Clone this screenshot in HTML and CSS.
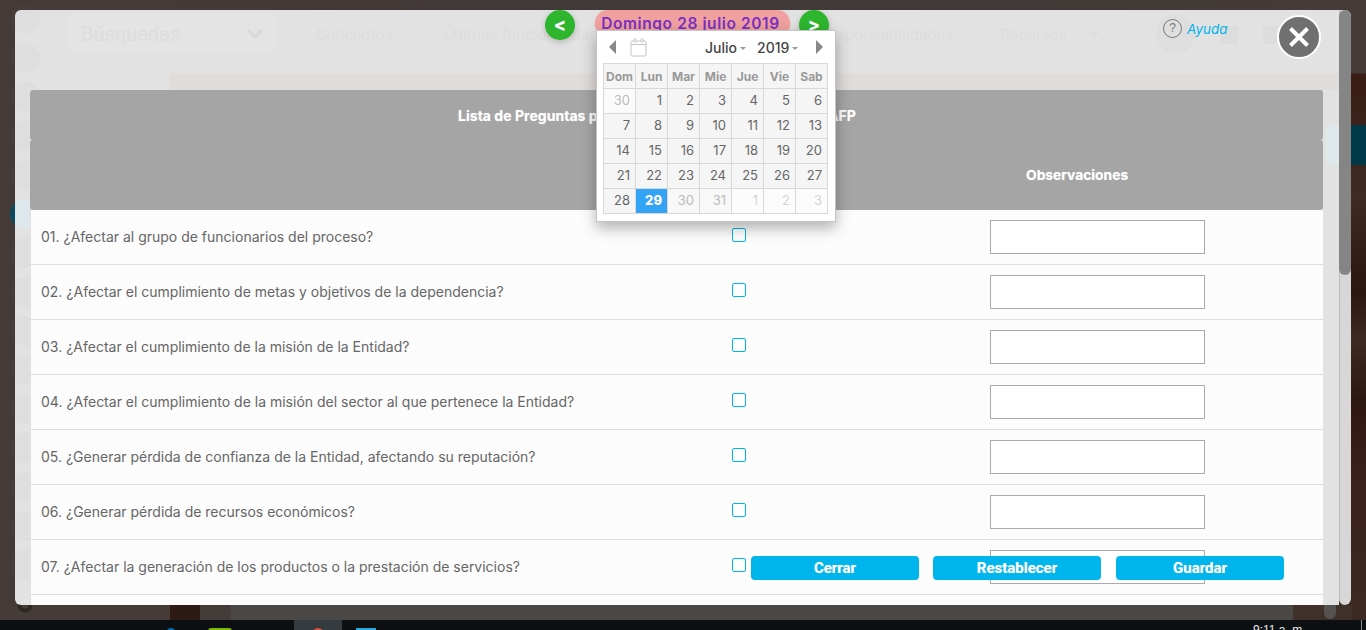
FILE: index.html

```html
<!DOCTYPE html>
<html lang="es">
<head>
  <meta charset="UTF-8" />
  <title>Lista de Preguntas</title>
  <link rel="stylesheet" href="styles.css">
</head>
<body>

  <!-- page behind the dialog -->
  <div class="desk">
    <div class="desk-top"></div>
    <div class="desk-side"><div class="desk-teal"></div></div>
    <div class="desk-bottom">
      <span class="seg seg-a"></span>
      <span class="seg seg-b"></span>
      <span class="seg seg-c"></span>
      <span class="seg seg-d"></span>
      <span class="seg seg-e"></span>
    </div>
    <svg class="gear" viewBox="0 0 16 16"><circle cx="8" cy="8" r="5.5" fill="none" stroke="#2b2826" stroke-width="4"/></svg>
    <div class="taskbar">
      <span class="task task-blue"></span>
      <span class="task task-green"></span>
      <span class="task task-active"><i></i></span>
      <span class="task task-sky"></span>
      <span class="clock">9:11 a. m.</span>
      <span class="tray-line"></span>
    </div>
  </div>

  <!-- dialog -->
  <div class="modal">
    <div class="modal-main">
      <div class="ghost-nav">
        <div class="ghost-search">Búsquedas
          <svg width="16" height="10" viewBox="0 0 16 10"><path d="M1 1l7 7 7-7" fill="none" stroke="#d8d8d8" stroke-width="3"/></svg>
        </div>
        <span class="ghost-link ghost-a">Conceptos</span>
        <span class="ghost-link ghost-b">Últimas funcionalidades</span>
        <span class="ghost-link ghost-c">Responsabilidades</span>
        <span class="ghost-link ghost-d">Recursos</span>
        <span class="ghost-caret"></span>
      </div>
      <div class="ghost-band"></div>
      <div class="ghost-tools">
        <span class="ghost-round"></span>
        <span class="ghost-box"></span>
        <span class="ghost-box"></span>
      </div>
      <div class="ghost-teal"></div>

      <div class="panel">
        <div class="panel-title">Lista de Preguntas para calificar el impacto del riesgo AFP</div>
        <div class="panel-cols">
          <span class="col-obs">Observaciones</span>
        </div>
        <div class="row"><span class="q">01. ¿Afectar al grupo de funcionarios del proceso?</span><span class="check"></span><span class="obs"></span></div>
        <div class="row"><span class="q">02. ¿Afectar el cumplimiento de metas y objetivos de la dependencia?</span><span class="check"></span><span class="obs"></span></div>
        <div class="row"><span class="q">03. ¿Afectar el cumplimiento de la misión de la Entidad?</span><span class="check"></span><span class="obs"></span></div>
        <div class="row"><span class="q">04. ¿Afectar el cumplimiento de la misión del sector al que pertenece la Entidad?</span><span class="check"></span><span class="obs"></span></div>
        <div class="row"><span class="q">05. ¿Generar pérdida de confianza de la Entidad, afectando su reputación?</span><span class="check"></span><span class="obs"></span></div>
        <div class="row"><span class="q">06. ¿Generar pérdida de recursos económicos?</span><span class="check"></span><span class="obs"></span></div>
        <div class="row"><span class="q">07. ¿Afectar la generación de los productos o la prestación de servicios?</span><span class="check"></span><span class="obs"></span></div>
        <div class="row"></div>
      </div>

      <div class="actions">
        <a class="btn">Cerrar</a>
        <a class="btn">Restablecer</a>
        <a class="btn">Guardar</a>
      </div>

      <div class="help">
        <span class="help-icon">?</span>
        <span class="help-text">Ayuda</span>
      </div>
      <div class="close">
        <svg width="24" height="24" viewBox="0 0 24 24"><path d="M3.5 3.5l17 17M20.5 3.5l-17 17" stroke="#fff" stroke-width="4"/></svg>
      </div>

      <a class="day-btn day-prev">&lt;</a>
      <div class="day-pill">Domingo 28 julio 2019</div>
      <a class="day-btn day-next">&gt;</a>

      <div class="calendar">
        <div class="cal-head">
          <span class="cal-arrow cal-left"></span>
          <svg class="cal-icon" width="17" height="19" viewBox="0 0 17 19">
            <rect x="1" y="3" width="15" height="15" rx="1" fill="none" stroke="#c4c4c4"/>
            <path d="M1 6.5h15" stroke="#c4c4c4"/>
            <rect x="4" y="1" width="2" height="3" fill="#fff" stroke="#c4c4c4" stroke-width=".8"/>
            <rect x="11" y="1" width="2" height="3" fill="#fff" stroke="#c4c4c4" stroke-width=".8"/>
          </svg>
          <span class="cal-pick cal-month">Julio</span>
          <span class="cal-pick cal-year">2019</span>
          <span class="cal-arrow cal-right"></span>
        </div>
        <table class="cal-table">
          <tr><th>Dom</th><th>Lun</th><th>Mar</th><th>Mie</th><th>Jue</th><th>Vie</th><th>Sab</th></tr>
          <tr><td class="off first">30</td><td>1</td><td>2</td><td>3</td><td>4</td><td>5</td><td>6</td></tr>
          <tr><td>7</td><td>8</td><td>9</td><td>10</td><td>11</td><td>12</td><td>13</td></tr>
          <tr><td>14</td><td>15</td><td>16</td><td>17</td><td>18</td><td>19</td><td>20</td></tr>
          <tr><td>21</td><td>22</td><td>23</td><td>24</td><td>25</td><td>26</td><td>27</td></tr>
          <tr><td>28</td><td class="today">29</td><td class="off">30</td><td class="off">31</td><td class="next">1</td><td class="next">2</td><td class="next">3</td></tr>
        </table>
      </div>
    </div>
    <div class="scrollbar"><div class="scroll-thumb"></div></div>
  </div>

  <!-- side menu of the page, shows through the dialog edge -->
  <div class="rail">
    <span class="rail-item"></span><span class="rail-item"></span><span class="rail-item"></span>
    <span class="rail-item"></span><span class="rail-item"></span><span class="rail-item rail-on"></span>
    <span class="rail-item"></span><span class="rail-item"></span><span class="rail-item"></span>
    <span class="rail-item"></span><span class="rail-item"></span><span class="rail-item"></span>
    <span class="rail-item"></span><span class="rail-item"></span><span class="rail-item"></span>
  </div>

</body>
</html>
```

FILE: styles.css

```css
html, body {
  margin: 0;
  padding: 0;
  width: 1366px;
  height: 630px;
  overflow: hidden;
  background: #443a38;
  font-family: "Inter", "Liberation Sans", sans-serif;
}

/* page behind */
.desk {
  position: absolute;
  inset: 0;
  overflow: hidden;
}

.desk-top {
  height: 10px;
  background: linear-gradient(90deg, #453a38 0, #403937 50%, #443b38 100%);
}

.desk-side {
  position: absolute;
  right: 0;
  top: 0;
  width: 28px;
  height: 620px;
  background: linear-gradient(180deg, #443a38 0, #443a38 73px, #3a1d15 74px, #3f2a22 200px, #2c1610 290px, #3e2a22 340px, #2e1710 400px, #3a2019 470px, #3d2a23 620px);
}

.desk-teal {
  position: absolute;
  top: 125px;
  left: 0;
  width: 100%;
  height: 40px;
  background: #003a4a;
}

.desk-bottom {
  position: absolute;
  left: 0;
  top: 605px;
  width: 100%;
  height: 15px;
  display: flex;
}

.seg { display: block; height: 100%; }
.seg-a { width: 170px; background: #453c38; }
.seg-b { width: 30px; background: #2e1a14; }
.seg-c { width: 31px; background: #443c38; }
.seg-d { width: 1062px; background: #4a4846; }
.seg-e { width: 59px; background: #3f3029; position: relative; }

.seg-e::after {
  content: "";
  position: absolute;
  left: 31px;
  top: 0;
  width: 12px;
  height: 14px;
  border-radius: 0 0 6px 6px;
  background: #555250;
}

.gear {
  position: absolute;
  left: 17px;
  top: 597px;
  width: 16px;
  height: 16px;
}

.taskbar {
  position: absolute;
  left: 0;
  top: 620px;
  width: 100%;
  height: 10px;
  background: #0c1013;
  display: flex;
  overflow: hidden;
}

.task { display: block; height: 100%; }
.task-blue { width: 8px; margin-left: 167px; position: relative; top: 8px; background: #0a6fb0; border-radius: 4px 4px 0 0; }
.task-green { width: 24px; margin-left: 33px; position: relative; top: 8px; background: #7dba00; border-radius: 3px 3px 0 0; }
.task-active { width: 48px; margin-left: 62px; background: #363b40; display: flex; justify-content: center; }
.task-active i { width: 12px; height: 12px; margin-top: 8px; border-radius: 50%; background: #d9503f; }
.task-sky { width: 20px; margin-left: 14px; position: relative; top: 8px; background: #29a9e0; }

.clock {
  margin-left: 877px;
  margin-top: 4px;
  font-family: "Liberation Sans", sans-serif;
  font-size: 12px;
  line-height: 12px;
  color: #e8e8e8;
  white-space: nowrap;
}

.tray-line {
  position: absolute;
  left: 1361px;
  top: 0;
  width: 1px;
  height: 100%;
  background: #8a8a8a;
}

/* dialog */
.modal {
  position: absolute;
  left: 15px;
  top: 10px;
  width: 1336px;
  height: 595px;
  display: flex;
  border-radius: 6px;
  overflow: hidden;
}

.modal-main {
  position: relative;
  width: 1324px;
  height: 100%;
  background: #e2e2e2;
  overflow: hidden;
}

.ghost-nav {
  height: 63px;
  display: flex;
  font-family: "Roboto", sans-serif;
  font-size: 16px;
  color: #dddddd;
}

.ghost-search {
  width: 208px;
  height: 41px;
  margin: 3px 0 0 53px;
  padding: 0 13px;
  box-sizing: border-box;
  display: flex;
  align-items: center;
  justify-content: space-between;
  background: #e4e4e4;
  border-radius: 9px;
  font-size: 20px;
}

.ghost-link { margin-top: 15px; white-space: nowrap; }
.ghost-a { margin-left: 40px; }
.ghost-b { margin-left: 51px; }
.ghost-c { margin-left: 203px; }
.ghost-d { margin-left: 47px; }

.ghost-caret {
  margin: 22px 0 0 22px;
  width: 0;
  height: 0;
  border-top: 6px solid #dddddd;
  border-left: 5px solid transparent;
  border-right: 5px solid transparent;
}

.ghost-band {
  height: 17px;
  margin-left: 155px;
  background: #e0dcda;
}

.ghost-tools {
  position: absolute;
  left: 1141px;
  top: 5px;
  display: flex;
  align-items: center;
  gap: 25px;
}

.ghost-round { width: 39px; height: 39px; border-radius: 50%; background: #dedede; }
.ghost-box { width: 18px; height: 18px; background: #dddddd; }

.ghost-teal {
  position: absolute;
  left: 1311px;
  top: 115px;
  width: 13px;
  height: 40px;
  border-radius: 4px 0 0 4px;
  background: #dfe8ea;
}

.panel {
  position: relative;
  z-index: 2;
  margin-left: 15px;
  width: 1293px;
  background: #e2e2e2;
}

.panel-title, .panel-cols {
  background: #a5a5a5;
  color: #fff;
  font-weight: 700;
  font-size: 14px;
  text-shadow: 0 0 1px rgba(255,255,255,0.5);
  border-radius: 3px;
  display: flex;
  align-items: center;
  box-sizing: border-box;
}

.panel-title {
  height: 50px;
  padding-left: 428px;
  letter-spacing: 0.03px;
  white-space: nowrap;
}

.panel-cols {
  height: 70px;
  padding-left: 996px;
  padding-bottom: 1px;
  font-size: 13.8px;
}

.row {
  height: 55px;
  box-sizing: border-box;
  display: grid;
  grid-template-columns: 701px 258px 1fr;
  align-items: center;
  background: #fcfcfc;
  border-left: 1px solid #e0e0e0;
  border-bottom: 1px solid #dcdcdc;
}

.q {
  padding-left: 10px;
  margin-bottom: 2px;
  font-size: 14px;
  color: #666;
  white-space: nowrap;
}

.check {
  width: 14px;
  height: 14px;
  box-sizing: border-box;
  margin-bottom: 5px;
  border: 1px solid #00b5ec;
  border-radius: 2px;
  background: #fff;
}

.obs {
  width: 215px;
  height: 34px;
  box-sizing: border-box;
  margin-bottom: 1px;
  border: 1px solid #aaa;
  background: #fff;
}

.actions {
  position: absolute;
  z-index: 3;
  left: 736px;
  top: 546px;
  display: flex;
  gap: 14px;
}

.btn {
  width: 168px;
  height: 24px;
  background: #00b5ec;
  color: #fff;
  border-radius: 4px;
  font-family: "Roboto", sans-serif;
  font-weight: 700;
  font-size: 15px;
  line-height: 24px;
  text-align: center;
  text-shadow: 0 0 1px rgba(255,255,255,0.5);
}

.btn:last-child { margin-left: 1px; }

.help {
  position: absolute;
  z-index: 3;
  left: 1148px;
  top: 9px;
  display: flex;
  align-items: center;
  gap: 5px;
}

.help-icon {
  width: 17px;
  height: 17px;
  border: 1px solid #777;
  border-radius: 50%;
  color: #777;
  font-family: "Liberation Sans", sans-serif;
  font-size: 12px;
  line-height: 17px;
  text-align: center;
}

.help-text {
  color: #00b5ec;
  font-style: italic;
  font-size: 13.5px;
}

.close {
  position: absolute;
  z-index: 3;
  left: 1262px;
  top: 5px;
  width: 44px;
  height: 44px;
  box-sizing: border-box;
  border: 2px solid #fff;
  border-radius: 50%;
  background: #707070;
  display: flex;
  align-items: center;
  justify-content: center;
}

.day-btn {
  position: absolute;
  z-index: 3;
  top: 0;
  width: 30px;
  height: 30px;
  border-radius: 50%;
  background: #2db52d;
  color: #fff;
  font-weight: 800;
  font-size: 18px;
  line-height: 29px;
  text-align: center;
  box-shadow: 0 2px 6px rgba(0,0,0,0.2);
}

.day-prev { left: 530px; }
.day-next { left: 784px; }

.day-pill {
  position: absolute;
  z-index: 3;
  left: 580px;
  top: 0;
  width: 195px;
  height: 27px;
  box-sizing: border-box;
  padding-right: 4px;
  border-radius: 14px;
  background: #f1a0a0;
  box-shadow: 0 0 2px rgba(240,130,130,0.6);
  color: #7a30c0;
  font-weight: 600;
  font-size: 15.5px;
  letter-spacing: 0.6px;
  line-height: 28px;
  text-align: center;
  white-space: nowrap;
}

.calendar {
  position: absolute;
  z-index: 4;
  left: 581px;
  top: 20px;
  width: 240px;
  height: 192px;
  box-sizing: border-box;
  padding: 0 6px;
  background: #fff;
  border: 1px solid #c4c4c4;
  box-shadow: 0 6px 14px rgba(0,0,0,0.3);
}

.cal-head {
  height: 32px;
  display: flex;
  align-items: center;
  position: relative;
}

.cal-arrow {
  width: 0;
  height: 0;
  border-top: 7px solid transparent;
  border-bottom: 7px solid transparent;
}

.cal-left { margin-left: 6px; border-right: 7px solid #888; }
.cal-right { margin-left: 18px; border-left: 7px solid #888; }
.cal-icon { margin-left: 14px; }

.cal-pick {
  font-size: 14px;
  font-weight: 500;
  color: #444;
}

.cal-pick::after {
  content: "";
  display: inline-block;
  margin-left: 3px;
  vertical-align: middle;
  border-top: 3px solid #999;
  border-left: 3px solid transparent;
  border-right: 3px solid transparent;
}

.cal-month { margin-left: 58px; }
.cal-year { margin-left: 11px; }

.cal-table {
  border-collapse: collapse;
  table-layout: fixed;
  width: 224px;
}

.cal-table th, .cal-table td {
  width: 32px;
  height: 25px;
  padding: 0;
  box-sizing: border-box;
  border: 1px solid #d8d8d8;
  background: #f5f5f5;
  font-size: 13px;
}

.cal-table th {
  color: #999;
  font-size: 12px;
  font-weight: 700;
  text-align: center;
}

.cal-table td {
  padding: 0 5px 2px 0;
  color: #666;
  text-align: right;
}

.cal-table td.off { color: #bbb; background: #f8f8f8; }
.cal-table td.first { background: #fbfbfb; }
.cal-table td.next { color: #d4d4d4; background: #fcfcfc; }
.cal-table td.today { background: #33a3f5; color: #fff; font-weight: 800; }

.scrollbar {
  width: 12px;
  height: 100%;
  background: #d8d6d6;
  border-radius: 0 0 6px 6px;
  box-shadow: inset 1px 0 1px #bdbdbd;
}

.scroll-thumb {
  height: 265px;
  background: #858585;
  border-radius: 6px;
}

/* side menu */
.rail {
  position: absolute;
  z-index: 1;
  left: 10px;
  top: 4px;
  width: 30px;
  display: flex;
  flex-direction: column;
  gap: 9px;
}

.rail-item {
  width: 30px;
  height: 30px;
  border-radius: 50%;
  background: rgba(128,128,128,0.04);
}

.rail-on {
  background: linear-gradient(90deg, #0b4a5c 5px, #dce8ec 5px);
}
```
